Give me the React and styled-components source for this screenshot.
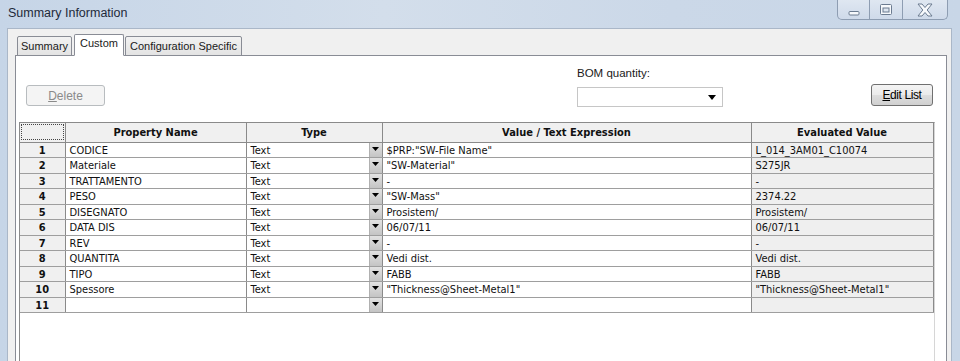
import React from "react";
import styled, { createGlobalStyle } from "styled-components";

const Global = createGlobalStyle`
  html, body { margin: 0; padding: 0; background: #cfdbea; }
  * { box-sizing: border-box; }
`;

const UI_FONT = `"Liberation Sans", Arial, sans-serif`;
const GRID_FONT = `"DejaVu Sans Condensed", "DejaVu Sans", sans-serif`;

const Window = styled.div`
  width: 960px;
  height: 361px;
  overflow: hidden;
  display: flex;
  flex-direction: column;
  background: linear-gradient(90deg, #c6d5e7 0%, #d3deeb 40%, #cbd8e8 70%, #c8d6e7 100%);
  font-family: ${UI_FONT};
`;

const TitleBar = styled.div`
  height: 28px;
  flex: none;
  display: flex;
  align-items: flex-start;
  padding-left: 8px;
  padding-right: 12px;
`;

const Title = styled.div`
  font-size: 12.5px;
  color: #1e2a3a;
  line-height: 28px;
  margin-top: -1px;
`;

const Controls = styled.div`
  margin-left: auto;
  display: flex;
  height: 20px;
  border: 1px solid #8e9db2;
  border-top: none;
  border-radius: 0 0 5px 5px;
  overflow: hidden;
  background: linear-gradient(#dfe7f1, #cfdaea);
`;

const CtlBtn = styled.div`
  width: ${(p) => p.$w}px;
  height: 100%;
  display: flex;
  align-items: center;
  justify-content: center;
  border-left: ${(p) => (p.$first ? "none" : "1px solid #8e9db2")};
`;

const Body = styled.div`
  flex: 1;
  display: flex;
  padding: 0 8px 0 7px;
  min-height: 0;
`;

const Client = styled.div`
  flex: 1;
  display: flex;
  flex-direction: column;
  background: #f0f0f0;
  border: 1px solid #aab7c8;
  border-bottom: none;
  padding: 6px 4px 0 7px;
`;

const TabStrip = styled.div`
  display: flex;
  align-items: flex-end;
  height: 21px;
  padding-left: 1px;
  position: relative;
  z-index: 1;
  margin-bottom: -1px;
`;

const Tab = styled.div`
  font-size: 11px;
  color: #1a1a1a;
  height: ${(p) => (p.$active ? 22 : 20)}px;
  line-height: ${(p) => (p.$active ? 17 : 19)}px;
  padding: 0 ${(p) => p.$pad}px;
  margin-left: ${(p) => p.$ml}px;
  border: 1px solid #898c95;
  border-bottom: ${(p) => (p.$active ? "1px solid #ffffff" : "1px solid #898c95")};
  background: ${(p) => (p.$active ? "#ffffff" : "linear-gradient(#f2f2f2, #e3e3e3)")};
  position: relative;
  z-index: ${(p) => (p.$active ? 2 : 1)};
  border-radius: 2px 2px 0 0;
  white-space: nowrap;
`;

const Panel = styled.div`
  flex: 1;
  display: flex;
  flex-direction: column;
  background: #ffffff;
  border: 1px solid #898c95;
  border-bottom: none;
  padding: 0 11px 0 3px;
`;

const Toolbar = styled.div`
  height: 66px;
  flex: none;
  display: flex;
  align-items: flex-end;
  padding-bottom: 15px;
`;

const Button = styled.div`
  width: ${(p) => p.$w}px;
  height: ${(p) => p.$h}px;
  border-radius: 3px;
  font-size: 12px;
  display: flex;
  align-items: center;
  justify-content: center;
  letter-spacing: ${(p) => (p.$tight ? "-0.4px" : "0")};
  color: ${(p) => (p.$disabled ? "#8a8a8a" : "#000")};
  border: 1px solid ${(p) => (p.$disabled ? "#b8bcbf" : "#707070")};
  background: ${(p) =>
    p.$disabled
      ? "#f4f4f4"
      : "linear-gradient(#f4f4f4 0%, #ebebeb 48%, #dddddd 52%, #d0d0d0 100%)"};
  u { text-decoration: underline; }
`;

const DeleteBtn = styled(Button)`
  margin-left: 7px;
  margin-bottom: 1px;
`;

const EditBtn = styled(Button)`
  margin-left: auto;
  margin-right: 2px;
  margin-bottom: 1px;
`;

const BomGroup = styled.div`
  margin-left: 472px;
  display: flex;
  flex-direction: column;
  gap: 7px;
`;

const BomLabel = styled.div`
  font-size: 11.5px;
  color: #1a1a1a;
  line-height: 14px;
`;

const Select = styled.div`
  width: 146px;
  height: 20px;
  border: 1px solid #c6c6c6;
  background: #fff;
  display: flex;
  align-items: center;
  justify-content: flex-end;
  padding-right: 6px;
`;

const GridBox = styled.div`
  flex: 1;
  width: 916px;
  background: #fff;
  border-top: 1px solid #8a8a8a;
  border-left: 1px solid #8a8a8a;
  border-right: 1px solid #d6d6d6;
`;

const Table = styled.table`
  border-collapse: collapse;
  table-layout: fixed;
  width: 913px;
  font-family: ${GRID_FONT};
  font-size: 11px;
  color: #111;
`;

const HeadCell = styled.th`
  height: 19px;
  padding: 0;
  background: #f0f0f0;
  font-weight: bold;
  font-size: 11px;
  text-align: center;
  border-right: 1px solid #8a8a8a;
  border-bottom: 1px solid #8a8a8a;
  white-space: nowrap;
`;

const Corner = styled.div`
  margin: 1px;
  height: 16px;
  border: 1px dotted #444;
`;

const Row = styled.tr`
  height: 15.5px;
`;

const NumCell = styled.td`
  padding: 1px 0 0 0;
  background: #f0f0f0;
  font-weight: bold;
  text-align: center;
  border-right: 1px solid #8a8a8a;
  border-bottom: 1px solid #9e9e9e;
  line-height: 13px;
`;

const Cell = styled.td`
  padding: ${(p) => (p.$pad === 0 ? "0" : "1px 0 0 4px")};
  background: ${(p) => (p.$shade ? "#efefef" : "#ffffff")};
  border-right: 1px solid #8a8a8a;
  border-bottom: 1px solid #9e9e9e;
  white-space: nowrap;
  overflow: hidden;
  line-height: 13px;
`;

const TypeInner = styled.div`
  display: flex;
  align-items: stretch;
  height: 14.5px;
`;

const TypeText = styled.span`
  flex: 1;
  padding: 1px 0 0 4px;
  line-height: 13.5px;
`;

const DropBtn = styled.span`
  width: 13px;
  flex: none;
  background: linear-gradient(#e2e2e2, #c4c4c4);
  border-left: 1px solid #b0b0b0;
  display: flex;
  justify-content: center;
  padding-top: 4px;
`;

const Tri = ({ w = 7, h = 4 }) => (
  <svg width={w} height={h} viewBox={`0 0 ${w} ${h}`}>
    <polygon points={`0,0 ${w},0 ${w / 2},${h}`} fill="#000" />
  </svg>
);

const rows = [
  ["CODICE", "Text", '$PRP:"SW-File Name"', "L_014_3AM01_C10074"],
  ["Materiale", "Text", '"SW-Material"', "S275JR"],
  ["TRATTAMENTO", "Text", "-", "-"],
  ["PESO", "Text", '"SW-Mass"', "2374.22"],
  ["DISEGNATO", "Text", "Prosistem/", "Prosistem/"],
  ["DATA DIS", "Text", "06/07/11", "06/07/11"],
  ["REV", "Text", "-", "-"],
  ["QUANTITA", "Text", "Vedi dist.", "Vedi dist."],
  ["TIPO", "Text", "FABB", "FABB"],
  ["Spessore", "Text", '"Thickness@Sheet-Metal1"', '"Thickness@Sheet-Metal1"'],
  ["", "", "", ""],
];

const MinIcon = () => (
  <svg width="14" height="14" viewBox="0 0 14 14">
    <rect x="2" y="8.5" width="10" height="3.5" rx="1" fill="#f7f9fc" stroke="#6b7b90" strokeWidth="1" />
  </svg>
);
const MaxIcon = () => (
  <svg width="14" height="14" viewBox="0 0 14 14">
    <rect x="1.5" y="1.5" width="11" height="10" rx="1" fill="#f7f9fc" stroke="#6b7b90" strokeWidth="1" />
    <rect x="4" y="5" width="6" height="4" fill="#dde5ef" stroke="#6b7b90" strokeWidth="1" />
  </svg>
);
const CloseIcon = () => (
  <svg width="20" height="16" viewBox="0 0 20 16">
    <path
      d="M3 2 H7 L10 5.5 L13 2 H17 L12.2 8 L17 14 H13 L10 10.5 L7 14 H3 L7.8 8 Z"
      fill="#f7f9fc"
      stroke="#6b7b90"
      strokeWidth="1"
      strokeLinejoin="round"
    />
  </svg>
);

export default function App() {
  return (
    <>
      <Global />
      <Window>
        <TitleBar>
          <Title>Summary Information</Title>
          <Controls>
            <CtlBtn $w={31} $first>
              <MinIcon />
            </CtlBtn>
            <CtlBtn $w={33}>
              <MaxIcon />
            </CtlBtn>
            <CtlBtn $w={45}>
              <CloseIcon />
            </CtlBtn>
          </Controls>
        </TitleBar>
        <Body>
          <Client>
            <TabStrip>
              <Tab $pad={3} $ml={1}>Summary</Tab>
              <Tab $active $pad={5} $ml={2}>Custom</Tab>
              <Tab $pad={4} $ml={1}>Configuration Specific</Tab>
            </TabStrip>
            <Panel>
              <Toolbar>
                <DeleteBtn $w={79} $h={21} $disabled>
                  <span>
                    <u>D</u>elete
                  </span>
                </DeleteBtn>
                <BomGroup>
                  <BomLabel>BOM quantity:</BomLabel>
                  <Select>
                    <Tri w={8} h={5} />
                  </Select>
                </BomGroup>
                <EditBtn $w={62} $h={22} $tight>
                  <span>
                    <u>E</u>dit List
                  </span>
                </EditBtn>
              </Toolbar>
              <GridBox>
                <Table>
                  <colgroup>
                    <col style={{ width: 45 }} />
                    <col style={{ width: 181 }} />
                    <col style={{ width: 136 }} />
                    <col style={{ width: 369 }} />
                    <col style={{ width: 182 }} />
                  </colgroup>
                  <thead>
                    <tr>
                      <HeadCell>
                        <Corner />
                      </HeadCell>
                      <HeadCell>Property Name</HeadCell>
                      <HeadCell>Type</HeadCell>
                      <HeadCell>Value / Text Expression</HeadCell>
                      <HeadCell>Evaluated Value</HeadCell>
                    </tr>
                  </thead>
                  <tbody>
                    {rows.map((r, i) => (
                      <Row key={i}>
                        <NumCell>{i + 1}</NumCell>
                        <Cell>{r[0]}</Cell>
                        <Cell $pad={0}>
                          <TypeInner>
                            <TypeText>{r[1]}</TypeText>
                            <DropBtn>
                              <Tri />
                            </DropBtn>
                          </TypeInner>
                        </Cell>
                        <Cell>{r[2]}</Cell>
                        <Cell $shade>{r[3]}</Cell>
                      </Row>
                    ))}
                  </tbody>
                </Table>
              </GridBox>
            </Panel>
          </Client>
        </Body>
      </Window>
    </>
  );
}
